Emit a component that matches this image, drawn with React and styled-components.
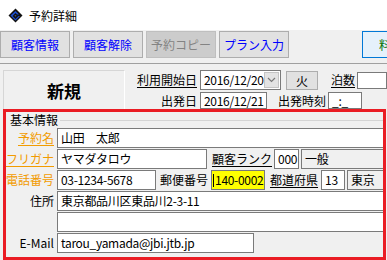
import styled, { createGlobalStyle } from "styled-components";

const Global = createGlobalStyle`
    html, body {
        margin: 0;
        padding: 0;
        background: #f0f0f0;
    }
    body {
        font-family: "Noto Sans CJK JP", "Noto Sans", sans-serif;
        font-size: 12px;
        color: #000;
    }
`;

const Window = styled.div`
    width: 387px;
    height: 260px;
    overflow: hidden;
    display: flex;
    flex-direction: column;
    background: #f0f0f0;
`;

const TitleBar = styled.div`
    height: 30px;
    flex: none;
    background: #fff;
    display: flex;
    align-items: center;
    gap: 6px;
    padding-left: 8px;
    font-size: 12px;
`;

const Toolbar = styled.div`
    height: 32px;
    flex: none;
    display: flex;
    align-items: flex-start;
    padding-top: 1px;
    gap: 3px;
    border-bottom: 1px solid #a0a0a0;
    overflow: hidden;
`;

const ToolButton = styled.div`
    flex: none;
    width: ${p => p.$w || 70}px;
    height: 27px;
    box-sizing: border-box;
    border: 1px solid ${p => p.$disabled ? '#bfbfbf' : '#adadad'};
    background: ${p => p.$disabled ? '#cccccc' : '#e1e1e1'};
    color: ${p => p.$disabled ? '#838383' : '#0000ff'};
    display: flex;
    align-items: center;
    justify-content: center;
    font-size: 12px;
`;

const AccentButton = styled(ToolButton)`
    margin-left: 70px;
    border-color: #0078d7;
    background: #e5f1fb;
    color: #007000;
    justify-content: flex-start;
    padding-left: 16px;
`;

const TopArea = styled.div`
    height: 45px;
    flex: none;
    display: flex;
    align-items: flex-start;
`;

const NewPanel = styled.div`
    margin: 6px 0 0 3px;
    width: 138px;
    height: 39px;
    box-sizing: border-box;
    border-top: 1px solid #d6d6d6;
    border-left: 1px solid #d6d6d6;
    border-right: 1px solid #fff;
    display: flex;
    justify-content: center;
    padding-top: 10px;
    font-size: 17px;
    font-weight: bold;
    line-height: 20px;
`;

const TopFields = styled.div`
    display: flex;
    flex-direction: column;
    gap: 2px;
    padding-top: 6px;
`;

const TopRow = styled.div`
    display: flex;
    align-items: center;
    height: ${p => p.$h}px;
`;

const Label = styled.span`
    flex: none;
    width: ${p => p.$w ? `${p.$w}px` : 'auto'};
    margin-left: ${p => p.$ml || 0}px;
    margin-right: ${p => p.$mr ?? 3}px;
    text-align: right;
    white-space: nowrap;
    color: ${p => p.$orange ? '#f29b00' : '#000'};
    text-decoration: ${p => p.$under ? 'underline' : 'none'};
    text-underline-offset: 2px;
    font-size: 12px;
    line-height: 16px;
`;

const Input = styled.div`
    flex: none;
    box-sizing: border-box;
    width: ${p => p.$w ? `${p.$w}px` : 'auto'};
    height: ${p => p.$h || 20}px;
    margin-left: ${p => p.$ml || 0}px;
    border: 1px solid #7a7a7a;
    background: ${p => p.$bg || '#fff'};
    padding-left: 3px;
    display: flex;
    align-items: center;
    white-space: nowrap;
    overflow: hidden;
    font-size: 12px;
    line-height: 14px;
    letter-spacing: -0.3px;
    ${p => p.$grow && 'flex: 1; margin-right: -4px;'}
`;

const Combo = styled(Input)`
    padding-right: 1px;
    justify-content: space-between;
`;

const DropButton = styled.div`
    width: 15px;
    height: 16px;
    background: #e3e3e3;
    border: 1px solid #c4c4c4;
    box-sizing: border-box;
    display: flex;
    align-items: center;
    justify-content: center;
`;

const DayButton = styled.div`
    flex: none;
    width: 32px;
    height: 19px;
    margin-left: 5px;
    box-sizing: border-box;
    border: 1px solid #adadad;
    background: #e1e1e1;
    display: flex;
    align-items: center;
    justify-content: center;
`;

const Frame = styled.div`
    flex: 1;
    margin: 0 1px 0 3px;
    border: 3px solid #ea1c24;
    display: flex;
    flex-direction: column;
    overflow: hidden;
`;

const GroupHeader = styled.div`
    height: 16px;
    display: flex;
    align-items: center;
    gap: 2px;
    padding-left: 4px;
    line-height: 16px;
    &::after {
        content: "";
        flex: 1;
        border-top: 1px solid #d4d4d4;
        margin-top: 1px;
    }
`;

const Rows = styled.div`
    display: flex;
    flex-direction: column;
    gap: 1px;
`;

const Row = styled.div`
    display: flex;
    align-items: center;
    height: 20px;
`;

const Caret = styled.span`
    display: inline-block;
    flex: none;
    width: 1px;
    height: 13px;
    background: #000;
    margin-right: 1px;
`;

function Logo () {
    return (
        <svg width="15" height="15" viewBox="0 0 15 15">
            <path d="M7.5 0.5 L14.5 7.5 L7.5 14.5 L0.5 7.5 Z" fill="#111" />
            <path d="M7.5 3 L11 6.5 L9 6.5 L7.5 5 L4.5 8 L7.5 11 L10.5 8 L12 8 L7.5 12.5 L2.5 7.5 Z" fill="#1a4fd6" />
            <path d="M6.5 7.5 L8.5 7.5 L7.5 8.5 Z" fill="#5a8cff" />
        </svg>
    );
}

function Chevron () {
    return (
        <svg width="9" height="6" viewBox="0 0 9 6">
            <path d="M1 1 L4.5 4.5 L8 1" stroke="#7a7a7a" strokeWidth="1.2" fill="none" />
        </svg>
    );
}

function App () {
    return (
        <Window>
            <Global />
            <TitleBar>
                <Logo />
                <span>予約詳細</span>
            </TitleBar>
            <Toolbar>
                <ToolButton>顧客情報</ToolButton>
                <ToolButton>顧客解除</ToolButton>
                <ToolButton $disabled>予約コピー</ToolButton>
                <ToolButton>プラン入力</ToolButton>
                <AccentButton $w={70}>料金計算</AccentButton>
            </Toolbar>
            <TopArea>
                <NewPanel>新規</NewPanel>
                <TopFields>
                    <TopRow $h={20}>
                        <Label $w={72} $under>利用開始日</Label>
                        <Combo $w={81}>
                            2016/12/20
                            <DropButton><Chevron /></DropButton>
                        </Combo>
                        <DayButton>火</DayButton>
                        <Label $ml={13} $mr={2} $under>泊数</Label>
                        <Input $w={30} $h={17} />
                    </TopRow>
                    <TopRow $h={17}>
                        <Label $w={72}>出発日</Label>
                        <Input $w={67} $h={17}>2016/12/21</Input>
                        <Label $ml={11} $mr={2}>出発時刻</Label>
                        <Input $w={34} $h={17}>_:_</Input>
                    </TopRow>
                </TopFields>
            </TopArea>
            <Frame>
                <GroupHeader>基本情報</GroupHeader>
                <Rows>
                    <Row>
                        <Label $w={48} $orange $under>予約名</Label>
                        <Input $grow>山田　太郎</Input>
                    </Row>
                    <Row>
                        <Label $w={48} $orange $under>フリガナ</Label>
                        <Input $w={150}>ヤマダタロウ</Input>
                        <Label $ml={5} $mr={2} $under>顧客ランク</Label>
                        <Input $w={25}>000</Input>
                        <Input $grow $ml={2} $bg="#f0f0f0">一般</Input>
                    </Row>
                    <Row>
                        <Label $w={48} $orange>電話番号</Label>
                        <Input $w={99}>03-1234-5678</Input>
                        <Label $ml={4}>郵便番号</Label>
                        <Input $w={54} $bg="#ffff00" style={{ paddingLeft: 1 }}><Caret />140-0002</Input>
                        <Label $ml={5} $mr={3} $under>都道府県</Label>
                        <Input $w={24}>13</Input>
                        <Input $grow $ml={2} $bg="#f0f0f0">東京</Input>
                    </Row>
                    <Row>
                        <Label $w={48}>住所</Label>
                        <Input $grow>東京都品川区東品川2-3-11</Input>
                    </Row>
                    <Row>
                        <Label $w={48}></Label>
                        <Input $grow />
                    </Row>
                    <Row>
                        <Label $w={48}>E-Mail</Label>
                        <Input $w={197}>tarou_yamada@jbi.jtb.jp</Input>
                    </Row>
                </Rows>
            </Frame>
        </Window>
    );
}

export default App;
